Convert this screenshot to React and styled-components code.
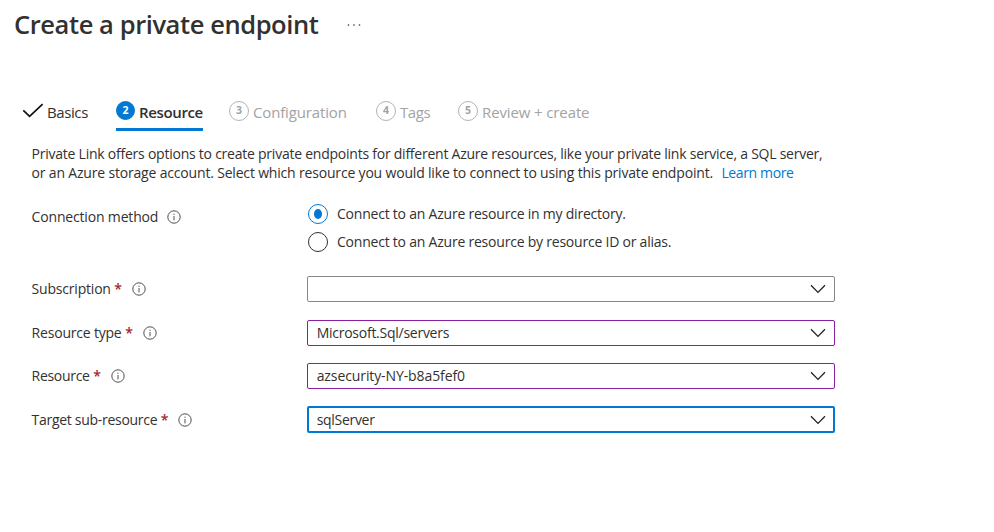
import React from 'react';
import styled, { createGlobalStyle } from 'styled-components';

const Global = createGlobalStyle`
  *, *::before, *::after { box-sizing: border-box; }
  body {
    margin: 0;
    background: #fff;
    color: #323130;
    font-family: "Open Sans", "Noto Sans", sans-serif;
    font-size: 14px;
  }
`;

const Page = styled.main`
  width: 994px;
  height: 532px;
  overflow: hidden;
  display: flex;
  flex-direction: column;
`;

const Header = styled.header`
  display: flex;
  align-items: center;
  height: 48px;
  padding-left: 14px;
`;

const Title = styled.h1`
  margin: 0;
  width: 333px;
  font-size: 25.5px;
  font-weight: 600;
  line-height: 46px;
  letter-spacing: -0.42px;
  white-space: nowrap;
`;

const MoreIcon = styled.svg`
  width: 14px;
  height: 4px;
  margin-top: 2px;
  fill: #323130;
`;

const Tabs = styled.nav`
  display: flex;
  height: 32px;
  margin-top: 51px;
  padding-left: 22px;
`;

const Tab = styled.div`
  display: flex;
  align-items: flex-start;
  height: 32px;
  padding-top: 2px;
  margin-right: ${(p) => p.$after || 0}px;
  width: ${(p) => p.$width}px;
  color: ${(p) => (p.$disabled ? '#a3a3a3' : '#323130')};
  font-size: 15px;
  font-weight: ${(p) => (p.$active ? 600 : 400)};
  border-bottom: 3px solid ${(p) => (p.$active ? '#0078d4' : 'transparent')};
`;

const TabLabel = styled.span`
  line-height: 22px;
  margin-left: ${(p) => p.$indent || 4}px;
  letter-spacing: ${(p) => p.$track || 0}px;
  white-space: nowrap;
`;

const StepBadge = styled.span`
  flex: none;
  width: ${(p) => (p.$active ? 19 : 20)}px;
  height: ${(p) => (p.$active ? 19 : 20)}px;
  border-radius: 50%;
  border: 1px solid ${(p) => (p.$active ? '#0078d4' : '#b3b3b3')};
  background: ${(p) => (p.$active ? '#0078d4' : '#fff')};
  color: ${(p) => (p.$active ? '#fff' : '#a3a3a3')};
  font-size: 10.5px;
  font-weight: 700;
  line-height: 17px;
  text-align: center;
`;

const CheckIcon = styled.svg`
  flex: none;
  width: 22px;
  height: 20px;
  fill: none;
  stroke: #111;
  stroke-width: 1.7;
`;

const Intro = styled.p`
  margin: 13px 0 0 31.6px;
  line-height: 19px;
  white-space: nowrap;
`;

const IntroLine = styled.span`
  display: block;
  letter-spacing: ${(p) => p.$track || 0}px;
`;

const Link = styled.a`
  margin-left: 5px;
  color: #0078d4;
  letter-spacing: -0.38px;
`;

const Form = styled.form`
  display: flex;
  flex-direction: column;
  margin-left: 31px;
`;

const Row = styled.div`
  display: flex;
  align-items: flex-start;
  margin-top: ${(p) => p.$gap}px;
`;

const Label = styled.div`
  display: flex;
  align-items: center;
  width: 276px;
  height: ${(p) => p.$height || 26}px;
  padding-left: 0.6px;
  letter-spacing: ${(p) => p.$track || -0.2}px;
  white-space: nowrap;
`;

const Text = styled.span`
  margin-bottom: ${(p) => (p.$flat ? 0 : 2)}px;
`;

const Required = styled.span`
  margin: 0 0 2px 3.6px;
  color: #a4262c;
  font-weight: 600;
`;

const Info = styled.svg`
  width: 14px;
  height: 14px;
  margin-left: ${(p) => p.$gap}px;
  fill: none;
  stroke: #505050;
`;

const RadioGroup = styled.div`
  display: flex;
  flex-direction: column;
  gap: 8px;
  padding-left: 1px;
`;

const RadioOption = styled.label`
  display: flex;
  align-items: center;
  height: 20px;
  letter-spacing: -0.22px;
  white-space: nowrap;
`;

const RadioMark = styled.span`
  display: grid;
  place-items: center;
  width: 20px;
  height: 20px;
  margin-right: 9px;
  border: 1px solid ${(p) => (p.$checked ? '#0078d4' : '#323130')};
  border-radius: 50%;

  &::after {
    content: '';
    width: 8px;
    height: 10px;
    border-radius: 50%;
    background: ${(p) => (p.$checked ? '#0078d4' : 'transparent')};
  }
`;

const borders = {
  plain: '1px solid #8a8886',
  changed: '1px solid #881fa3',
  focused: '2px solid #0078d4',
};

const Select = styled.div`
  display: flex;
  align-items: center;
  justify-content: space-between;
  width: 528px;
  height: ${(p) => (p.$state === 'focused' ? 27 : 26)}px;
  padding: 0 ${(p) => (p.$state === 'focused' ? 7 : 8)}px 0 ${(p) => (p.$state === 'focused' ? 7.7 : 8.7)}px;
  border: ${(p) => borders[p.$state]};
  border-radius: 2px;
  letter-spacing: ${(p) => p.$track || 0}px;
`;

const Chevron = styled.svg`
  width: 16px;
  height: 10px;
  fill: none;
  stroke: #222;
  stroke-width: 1.3;
`;

const steps = [
  { n: 3, text: 'Configuration', width: 118, after: 29, track: -0.15 },
  { n: 4, text: 'Tags', width: 55, after: 27, track: -0.4 },
  { n: 5, text: 'Review + create', width: 140, track: -0.12 },
];

const fields = [
  { label: 'Subscription', value: '', state: 'plain', gap: 24 },
  { label: 'Resource type', value: 'Microsoft.Sql/servers', state: 'changed', gap: 18, track: -0.26 },
  { label: 'Resource', value: 'azsecurity-NY-b8a5fef0', state: 'changed', gap: 17, track: -0.1, labelTrack: -0.3 },
  {
    label: 'Target sub-resource',
    value: 'sqlServer',
    state: 'focused',
    gap: 17,
    track: -0.3,
    labelTrack: -0.29,
    labelHeight: 28,
  },
];

function InfoIcon({ gap = 10 }) {
  return (
    <Info viewBox="0 0 14 14" $gap={gap}>
      <circle cx="7" cy="7" r="6.2" />
      <path d="M7 6v4.4M7 3.7v1.2" />
    </Info>
  );
}

export default function App() {
  return (
    <Page>
      <Global />
      <Header>
        <Title>Create a private endpoint</Title>
        <MoreIcon viewBox="0 0 14 4">
          <circle cx="1.5" cy="2" r="0.8" />
          <circle cx="7" cy="2" r="0.8" />
          <circle cx="12.5" cy="2" r="0.8" />
        </MoreIcon>
      </Header>
      <Tabs>
        <Tab $width={66} $after={28}>
          <CheckIcon viewBox="0 0 22 20">
            <path d="M1.3 9.3 7.6 15.4 20.6 3.2" />
          </CheckIcon>
          <TabLabel $indent={3} $track={-0.4}>Basics</TabLabel>
        </Tab>
        <Tab $width={87} $after={26} $active>
          <StepBadge $active>2</StepBadge>
          <TabLabel $track={-0.36}>Resource</TabLabel>
        </Tab>
        {steps.map((s) => (
          <Tab key={s.n} $width={s.width} $after={s.after} $disabled>
            <StepBadge>{s.n}</StepBadge>
            <TabLabel $track={s.track}>{s.text}</TabLabel>
          </Tab>
        ))}
      </Tabs>
      <Intro>
        <IntroLine $track={-0.239}>
          Private Link offers options to create private endpoints for different Azure resources, like your private link
          service, a SQL server,
        </IntroLine>
        <IntroLine $track={-0.18}>
          or an Azure storage account. Select which resource you would like to connect to using this private endpoint.{' '}
          <Link>Learn more</Link>
        </IntroLine>
      </Intro>
      <Form>
        <Row $gap={22}>
          <Label $track={-0.17}>
            <Text>Connection method</Text>
            <InfoIcon gap={9.2} />
          </Label>
          <RadioGroup>
            <RadioOption>
              <RadioMark $checked />
              <Text>Connect to an Azure resource in my directory.</Text>
            </RadioOption>
            <RadioOption>
              <RadioMark />
              <Text>Connect to an Azure resource by resource ID or alias.</Text>
            </RadioOption>
          </RadioGroup>
        </Row>
        {fields.map((f) => (
          <Row key={f.label} $gap={f.gap}>
            <Label $track={f.labelTrack} $height={f.labelHeight}>
              <Text>{f.label}</Text>
              <Required>*</Required>
              <InfoIcon />
            </Label>
            <Select $state={f.state} $track={f.track}>
              <Text $flat={f.state === 'focused'}>{f.value}</Text>
              <Chevron viewBox="0 0 16 10">
                <path d="M1 1.3 8 8.4 15 1.3" />
              </Chevron>
            </Select>
          </Row>
        ))}
      </Form>
    </Page>
  );
}
